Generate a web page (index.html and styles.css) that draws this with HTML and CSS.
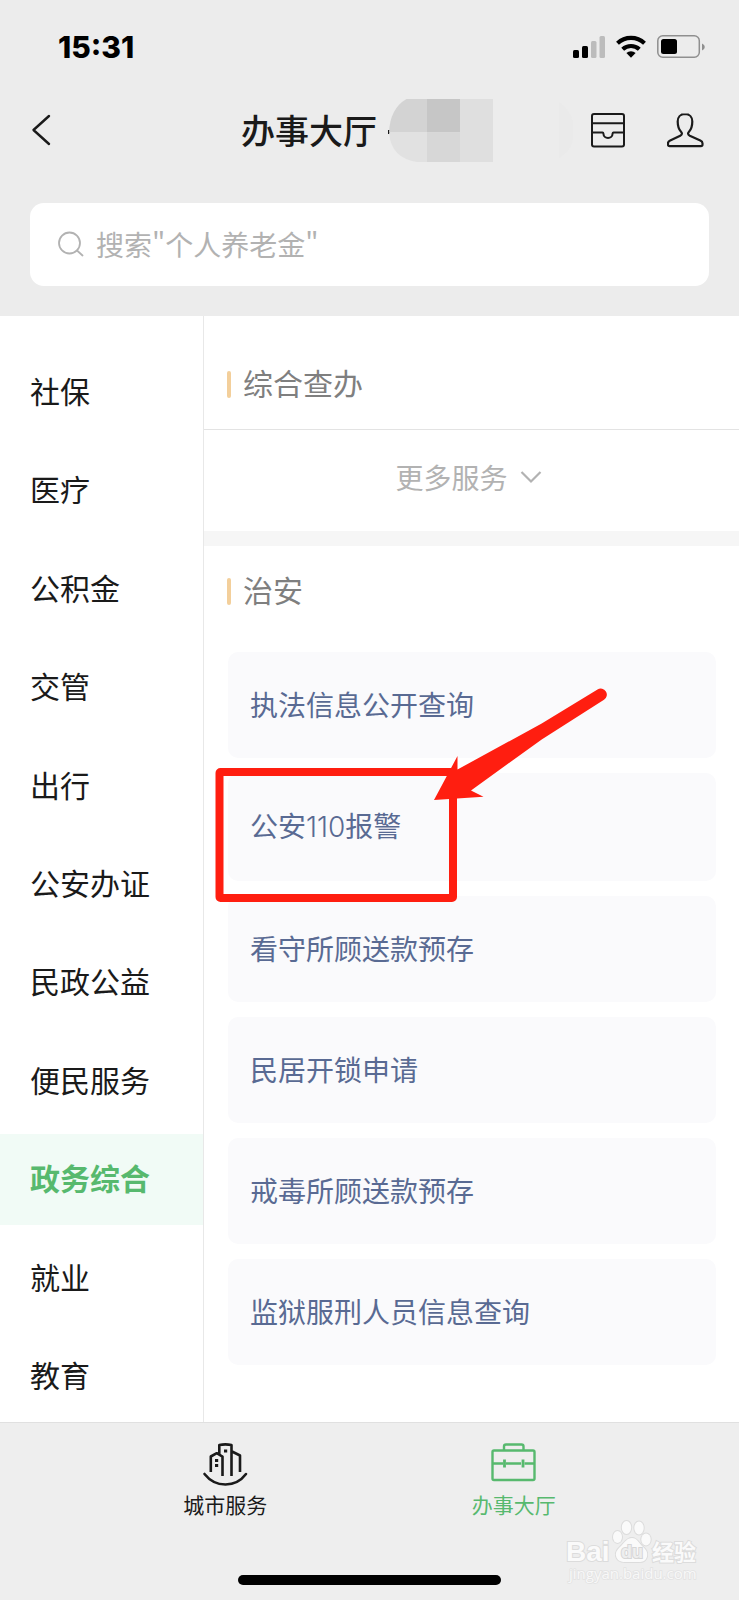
FILE: index.html
```html
<!DOCTYPE html>
<html lang="zh-CN">
<head>
<meta charset="utf-8">
<meta name="viewport" content="width=device-width, initial-scale=1">
<title>办事大厅</title>
<link rel="stylesheet" href="styles.css">
</head>
<body>
<div class="app">
  <header class="top">
    <div class="status">
      <span class="time">15:31</span>
      <svg class="status-icons" width="132" height="24" viewBox="573 35 132 24" role="img" aria-label="信号、无线网络与电量">
        <rect x="573" y="50" width="6" height="8" rx="1.5"/>
        <rect x="582" y="46" width="6" height="12" rx="1.5"/>
        <rect x="591" y="41" width="5.5" height="17" rx="1.5" fill="#bcbcbc"/>
        <rect x="599.500" y="36" width="5.500" height="22" rx="1.5" fill="#bcbcbc"/>
        <g fill="none" stroke="#000" stroke-width="4.200">
          <path d="M617.500 43.200a20 20 0 0 1 27 0"/>
          <path d="M622.700 49.200a12.300 12.300 0 0 1 16.600 0"/>
        </g>
        <path d="M631 57.800l-4.600-4.700a6.600 6.600 0 0 1 9.200 0z"/>
        <rect x="657.800" y="35.800" width="41.500" height="21.500" rx="5" fill="none" stroke="#8f8f8f" stroke-width="1.500"/>
        <rect x="661" y="39" width="16" height="15" rx="2.500"/>
        <path d="M702 43.500q2.800 1 2.800 3.500t-2.800 3.500z" fill="#8f8f8f"/>
      </svg>
    </div>
    <div class="nav">
      <button class="icon-btn" aria-label="返回">
        <svg width="22" height="34" viewBox="30 114 22 34"><path d="M49 117L33.500 131 49 145" fill="none" stroke="#1a1a1a" stroke-width="2.400" stroke-linecap="round" stroke-linejoin="round"/></svg>
      </button>
      <h1 class="title">办事大厅</h1>
      <svg class="mosaic" width="185" height="63" viewBox="388 98 185 63" aria-hidden="true">
        <rect x="388" y="129" width="2" height="4" fill="#1a1a1a"/>
        <path d="M406.500 98H427v33.500H389q1-24 17.500-33.500z" fill="#d3d3d3"/>
        <path d="M389 131.500h38V161h-10q-26-4-28-29.500z" fill="#e1e1e1"/>
        <path d="M427 98h33v33.500h-33z" fill="#c6c6c6"/>
        <path d="M427 131.500h33V161h-33z" fill="#d7d7d7"/>
        <path d="M460 98h33v63h-33z" fill="#dfdfdf"/>
        <path d="M559 101q15 10 15 29t-15 27z" fill="#eaeaea"/>
      </svg>
      <div class="actions">
        <button class="icon-btn" aria-label="卡包">
          <svg width="34" height="36" viewBox="591 113 34 36" fill="none" stroke="#1a1a1a" stroke-width="2"><rect x="592" y="115" width="32" height="32.500" rx="2"/><path d="M592 124.200h32M592 133.500h10.500q.8 0 1 1.500a4.500 4 0 0 0 9 0q.2-1.500 1-1.500H624"/></svg>
        </button>
        <button class="icon-btn" aria-label="我的">
          <svg width="37" height="36" viewBox="667 113 37 36" fill="none" stroke="#1a1a1a" stroke-width="2.200" stroke-linejoin="round"><path d="M685 115c-4.700 0-7.300 3.200-7.300 7.500 0 4.500.7 7.500 3.300 10.200 1.400 1.500 1.200 3-.8 4l-10 4.800c-1.600.8-2.200 1.600-2.200 2.700v1.300c0 1.100.6 1.700 1.600 1.700h31.300c1 0 1.600-.6 1.600-1.700v-1.300c0-1.100-.6-1.900-2.200-2.700l-10.500-4.800c-2-1-2.200-2.500-.8-4 2.600-2.700 3.300-5.700 3.300-10.200 0-4.300-2.600-7.500-7.300-7.500z"/></svg>
        </button>
      </div>
    </div>
    <form class="search" role="search">
      <svg width="26" height="26" viewBox="0 0 26 26" fill="none" stroke="#b2b2b2" stroke-width="1.800" stroke-linecap="round"><circle cx="11.500" cy="12" r="10.500"/><path d="M19 19.500l5.500 5"/></svg>
      <input class="search-input" type="text" aria-label="搜索" placeholder='搜索"个人养老金"'>
    </form>
  </header>

  <main class="main">
    <nav class="side" aria-label="分类">
      <a class="side-item" href="#">社保</a>
      <a class="side-item" href="#">医疗</a>
      <a class="side-item" href="#">公积金</a>
      <a class="side-item" href="#">交管</a>
      <a class="side-item" href="#">出行</a>
      <a class="side-item" href="#">公安办证</a>
      <a class="side-item" href="#">民政公益</a>
      <a class="side-item" href="#">便民服务</a>
      <a class="side-item active" href="#" aria-current="page">政务综合</a>
      <a class="side-item" href="#">就业</a>
      <a class="side-item" href="#">教育</a>
    </nav>
    <div class="content">
      <section class="group group-first">
        <h2 class="group-title"><span>综合查办</span></h2>
        <button class="more">更多服务
          <svg width="22" height="14" viewBox="0 0 22 14" fill="none" stroke="#b2b2b2" stroke-width="2.200"><path d="M1.500 2l9.500 9.500L20.500 2"/></svg>
        </button>
      </section>
      <section class="group">
        <h2 class="group-title"><span>治安</span></h2>
        <ul class="cards">
          <li class="card-row"><a class="card" href="#">执法信息公开查询</a></li>
          <li class="card-row"><a class="card" href="#">公安<span class="digits">110</span>报警</a>
            <svg class="callout" width="395" height="220" viewBox="215 685 395 220" aria-hidden="true">
              <rect x="219.500" y="772" width="233.500" height="126" rx="1" fill="none" stroke="#ff1e10" stroke-width="8" stroke-linejoin="round"/>
              <path d="M434 800L457.500 756V769.500L541.700 723.500L597.500 689.500A6 6 0 0 1 604 699.800L541.700 739.500L471 790.500L483.500 796.700z" fill="#ff1e10"/>
            </svg>
          </li>
          <li class="card-row"><a class="card" href="#">看守所顾送款预存</a></li>
          <li class="card-row"><a class="card" href="#">民居开锁申请</a></li>
          <li class="card-row"><a class="card" href="#">戒毒所顾送款预存</a></li>
          <li class="card-row"><a class="card" href="#">监狱服刑人员信息查询</a></li>
        </ul>
      </section>
    </div>
  </main>

  <footer class="bottom">
    <nav class="tabs" aria-label="主导航">
      <a class="tab" href="#">
        <svg width="46" height="44" viewBox="202 1443 46 44" fill="none" stroke="#1a1a1a" stroke-width="2.600" stroke-linejoin="round">
          <path d="M204.500 1474c11 14 31 14 41.500 0" stroke-linecap="round"/>
          <path d="M210.800 1472v-15.500l6-3.300 5.700 3.300V1476M219.300 1454.500v-9.500q6-1.200 12.200 0V1476M232 1451.500l8 4V1472"/>
          <path d="M215 1460.500h3.200M215 1465.500h3.200M224 1451h3.200" stroke-width="3"/>
        </svg>
        <span>城市服务</span>
      </a>
      <a class="tab tab-active" href="#" aria-current="page">
        <svg width="46" height="44" viewBox="491 1443 46 44" fill="none" stroke="#57b96e" stroke-width="2.400">
          <rect x="492.500" y="1450.500" width="42" height="29.500" rx="1.500"/>
          <path d="M504 1450.500v-4q0-2 2-2h15.500q2 0 2 2v4M492.500 1463.500H503M506 1463.500h15M524.500 1463.500h10"/>
          <path d="M504.500 1459.500v8M523 1459.500v8" stroke-width="2.800"/>
        </svg>
        <span>办事大厅</span>
      </a>
    </nav>
    <div class="home-bar"></div>
    <div class="watermark" aria-hidden="true">
      <svg width="134" height="68" viewBox="566 1518 134 68">
        <g fill="#fafafa" stroke="#dcdcdc" stroke-width="2" paint-order="stroke" font-family="'Liberation Sans','Noto Sans CJK SC',sans-serif" font-weight="700">
          <text x="566" y="1561" font-size="28">Bai</text>
          <ellipse cx="617.500" cy="1537" rx="4.500" ry="6"/>
          <ellipse cx="626.500" cy="1527.500" rx="4.700" ry="6.500"/>
          <ellipse cx="639" cy="1528" rx="4.700" ry="6.500"/>
          <ellipse cx="646" cy="1539.500" rx="4.700" ry="6"/>
          <path d="M632 1538c5 0 7 5 10 8 4 3.500 6 6 5 10.500-1 4.500-4.500 5.500-8 5.500h-14c-4 0-8-1.500-9-6-.8-4.500 2-7 5.500-10.500 3-3 5.500-7.500 10.500-7.500z"/>
          <text x="621" y="1558" font-size="18" fill="#eee" stroke="#d6d6d6">du</text>
          <text x="652" y="1560" font-size="22">经验</text>
        </g>
        <text x="569" y="1579" font-size="15" font-family="'Open Sans',sans-serif" fill="#f8f8f8" stroke="#e2e2e2" stroke-width="1.500" paint-order="stroke">jingyan.baidu.com</text>
      </svg>
    </div>
  </footer>
</div>
</body>
</html>
```
FILE: styles.css
```css
* {
  box-sizing: border-box;
}

body {
  margin: 0;
  background: #fff;
  color: #1a1a1a;
  font-family: "Noto Sans CJK SC", sans-serif;
}

a {
  color: inherit;
  text-decoration: none;
}

button {
  padding: 0;
  border: 0;
  background: none;
  font: inherit;
}

svg {
  display: block;
  flex: none;
}

.app {
  display: flex;
  flex-direction: column;
  min-height: 100vh;
}

.top {
  padding: 0 30px 30px;
  background: #ececec;
}

.status {
  display: flex;
  align-items: center;
  justify-content: space-between;
  height: 94px;
  padding: 0 4px 0 28px;
}

.time {
  color: #000;
  font: 800 30px/36px Inter, sans-serif;
}

.nav {
  display: flex;
  align-items: center;
  height: 72px;
  padding-right: 5px;
}

.title {
  margin: 0 11px 0 auto;
  font-size: 34px;
  font-weight: 500;
  line-height: 50px;
}

.actions {
  display: flex;
  gap: 42px;
  margin-left: 18px;
}

.search {
  display: flex;
  align-items: center;
  gap: 12px;
  height: 83px;
  margin-top: 37px;
  padding: 0 28px 2px;
  border-radius: 14px;
  background: #fff;
}

.search-input {
  flex: 1;
  min-width: 0;
  padding: 0;
  border: 0;
  outline: 0;
  background: none;
  font: 400 28px/42px "Noto Sans CJK SC", sans-serif;
}

.search-input::placeholder {
  color: #b2b2b2;
  opacity: 1;
}

.main {
  display: flex;
  flex: 1;
}

.side {
  display: flex;
  flex: none;
  flex-direction: column;
  justify-content: space-between;
  width: 204px;
  padding-top: 31px;
  border-right: 1px solid #e8e8e8;
}

.side-item {
  padding: 0 30px 4px;
  font-size: 30px;
  line-height: 87px;
}

.active {
  background: #f1fbf6;
  color: #57b96e;
  font-weight: 700;
}

.content {
  flex: 1;
  min-width: 0;
}

.group-first {
  padding-top: 23px;
  border-bottom: 15px solid #f6f6f6;
}

.group-title {
  display: flex;
  align-items: center;
  gap: 12px;
  margin: 0;
  padding: 23px 23px;
  color: #7f7f7f;
  font-size: 30px;
  font-weight: 400;
  line-height: 40px;
}

.group-title span {
  padding-bottom: 4px;
}

.group-title::before {
  content: "";
  width: 4px;
  height: 27px;
  border-radius: 2px;
  background: #f3cf9b;
}

.more {
  display: flex;
  align-items: center;
  justify-content: center;
  gap: 12px;
  width: 100%;
  height: 102px;
  padding: 0 6px 8px 0;
  border-top: 1px solid #e3e3e3;
  color: #b2b2b2;
  font-size: 28px;
}

.cards {
  display: grid;
  gap: 15px;
  margin: 0;
  padding: 16px 23px 50px 24px;
  list-style: none;
}

.card-row {
  position: relative;
}

.card {
  display: block;
  padding: 0 22px 2px;
  border-radius: 10px;
  background: #fafafc;
  color: #596a93;
  font-size: 28px;
  line-height: 104px;
}

.digits {
  font-family: Inter, sans-serif;
  font-weight: 300;
}

.callout {
  position: absolute;
  z-index: 1;
  top: -88px;
  left: -13px;
}

.bottom {
  position: relative;
  padding: 20px 0 15px;
  border-top: 1px solid #e0e0e0;
  background: #eee;
}

.tabs {
  display: flex;
  padding: 0 81px;
}

.tab {
  display: flex;
  flex: 1;
  flex-direction: column;
  align-items: center;
  gap: 2px;
  font-size: 21px;
  line-height: 30px;
}

.tab-active {
  color: #57b96e;
}

.home-bar {
  width: 263px;
  height: 10px;
  margin: 56px auto 0;
  border-radius: 5px;
  background: #000;
}

.watermark {
  position: absolute;
  right: 39px;
  bottom: 14px;
}
```
